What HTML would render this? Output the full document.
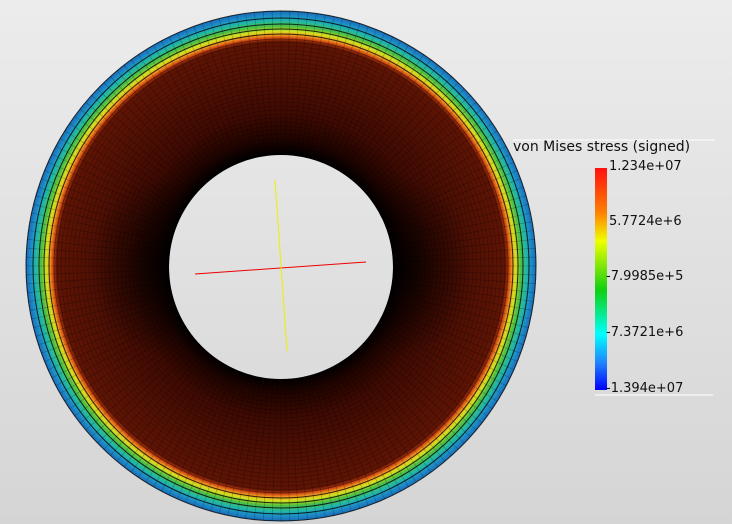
<!DOCTYPE html>
<html><head><style>
html,body{margin:0;padding:0;width:732px;height:524px;overflow:hidden}
body{background:linear-gradient(#ececec,#d5d5d5);font-family:"DejaVu Sans","Liberation Sans",sans-serif}
.t{position:absolute;font-size:13px;color:#111;white-space:nowrap}
</style></head><body>
<svg width="732" height="524" style="position:absolute;left:0;top:0">
<defs>
<radialGradient id="g" cx="281" cy="266" r="255" gradientUnits="userSpaceOnUse">
<stop offset="0.44" stop-color="#000"/>
<stop offset="0.5" stop-color="#200400"/>
<stop offset="0.6" stop-color="#3e0a02"/>
<stop offset="0.75" stop-color="#501004"/>
<stop offset="0.88" stop-color="#5e1404"/>
<stop offset="0.893" stop-color="#c84010"/>
<stop offset="0.905" stop-color="#f09020"/>
<stop offset="0.92" stop-color="#d8e020"/>
<stop offset="0.94" stop-color="#50c040"/>
<stop offset="0.962" stop-color="#20b8a8"/>
<stop offset="0.982" stop-color="#1e8cc8"/>
<stop offset="1" stop-color="#1a6cb8"/>
</radialGradient>
<radialGradient id="side" cx="0.5" cy="0.5" r="0.5">
<stop offset="0" stop-color="#000" stop-opacity="0.7"/>
<stop offset="1" stop-color="#000" stop-opacity="0"/>
</radialGradient>
<linearGradient id="lg" x1="0" y1="0" x2="0" y2="1">
<stop offset="0" stop-color="#ff1010"/>
<stop offset="0.2" stop-color="#ff8000"/>
<stop offset="0.33" stop-color="#f0ff00"/>
<stop offset="0.55" stop-color="#10d010"/>
<stop offset="0.75" stop-color="#00ffff"/>
<stop offset="0.88" stop-color="#2080ff"/>
<stop offset="1" stop-color="#0000ff"/>
</linearGradient>
<clipPath id="ring"><path clip-rule="evenodd" d="M26,266a255,255 0 1,0 510,0a255,255 0 1,0 -510,0Z M169,267a112,112 0 1,0 224,0a112,112 0 1,0 -224,0Z"/></clipPath>
</defs>
<path fill-rule="evenodd" fill="url(#g)" d="M26,266a255,255 0 1,0 510,0a255,255 0 1,0 -510,0Z M169,267a112,112 0 1,0 224,0a112,112 0 1,0 -224,0Z"/>
<g clip-path="url(#ring)">
<ellipse cx="160" cy="266" rx="70" ry="90" fill="url(#side)"/>
<ellipse cx="402" cy="266" rx="70" ry="90" fill="url(#side)"/>
</g>
<g fill="none" stroke="#000" stroke-width="1" opacity="0.8">
<circle cx="281" cy="266" r="255"/>
<circle cx="281" cy="266" r="248"/>
<circle cx="281" cy="266" r="242"/>
<circle cx="281" cy="266" r="237"/>
<circle cx="281" cy="266" r="232"/>
<circle cx="281" cy="266" r="227" opacity="0.5"/>
</g>
<g stroke="#000" stroke-width="0.6" opacity="0.3" id="rad"></g>
<g fill="none" stroke="#000" stroke-width="0.5" opacity="0.35" id="circ"></g>
<line x1="195" y1="274" x2="366" y2="262" stroke="#e00" stroke-width="1"/>
<line x1="275" y1="180" x2="287" y2="351" stroke="#ee0" stroke-width="1"/>
<line x1="513" y1="140" x2="715" y2="140" stroke="#fff"/>
<line x1="595" y1="395" x2="713" y2="395" stroke="#fff"/>
<rect x="595" y="168" width="12" height="222" fill="url(#lg)"/>
</svg>
<script>
var g=document.getElementById('rad'),s='';
for(var i=0;i<180;i++){var a=i*Math.PI/90,c=Math.cos(a),n=Math.sin(a);
s+='<line x1="'+(281+113*c)+'" y1="'+(266+113*n)+'" x2="'+(281+255*c)+'" y2="'+(266+255*n)+'"/>';}
g.innerHTML=s;
var h='';for(var r=116;r<228;r+=4){h+='<circle cx="281" cy="266" r="'+r+'"/>';}
document.getElementById('circ').innerHTML=h;
</script>
<div class="t" style="left:513px;top:139px;font-size:14px">von Mises stress (signed)</div>
<div class="t" style="left:609px;top:159px">1.234e+07</div>
<div class="t" style="left:609px;top:214px">5.7724e+6</div>
<div class="t" style="left:606px;top:269px">-7.9985e+5</div>
<div class="t" style="left:606px;top:325px">-7.3721e+6</div>
<div class="t" style="left:606px;top:381px">-1.394e+07</div>
</body></html>
